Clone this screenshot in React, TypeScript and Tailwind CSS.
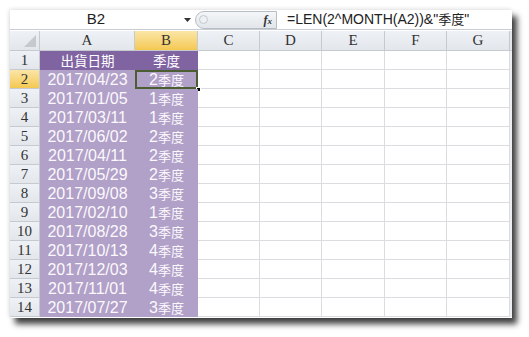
import React from "react";

const rows: [string, string][] = [
  ["2017/04/23", "2"],
  ["2017/01/05", "1"],
  ["2017/03/11", "1"],
  ["2017/06/02", "2"],
  ["2017/04/11", "2"],
  ["2017/05/29", "2"],
  ["2017/09/08", "3"],
  ["2017/02/10", "1"],
  ["2017/08/28", "3"],
  ["2017/10/13", "4"],
  ["2017/12/03", "4"],
  ["2017/11/01", "4"],
  ["2017/07/27", "3"],
];

const cols = [
  { name: "A", w: "w-[95px]" },
  { name: "B", w: "w-[63px]" },
  { name: "C", w: "w-[62px]" },
  { name: "D", w: "w-[62px]" },
  { name: "E", w: "w-[63px]" },
  { name: "F", w: "w-[62px]" },
  { name: "G", w: "w-[63px]" },
];

const sans = "font-['Liberation_Sans','Noto_Sans_CJK_TC',sans-serif]";
const serif = "font-['Liberation_Serif','Noto_Sans_CJK_TC',serif]";
const cjk = "font-['Noto_Sans_CJK_TC',sans-serif]";

const RowHead = ({ n, active }: { n: number; active?: boolean }) => (
  <div
    className={`w-[30px] h-[19px] shrink-0 flex items-center justify-center border-r border-b border-[#c5cad1] text-[15px] leading-none text-[#333] ${serif} ${
      active ? "bg-gradient-to-b from-[#fbe6a6] to-[#f4c84f]" : "bg-gradient-to-b from-[#eef1f5] to-[#e3e7ec]"
    }`}
  >
    {n}
  </div>
);

const App = () => {
  return (
    <div className="w-[529px] h-[337px] bg-white relative overflow-hidden">
      <div className="absolute left-[10px] top-[10px] w-[502px] h-[308px] bg-white shadow-[5px_6px_6px_rgba(0,0,0,0.75),-1px_-1px_4px_rgba(0,0,0,0.12)] flex flex-col">
        {/* formula bar */}
        <div className="h-[20px] flex items-center border-b border-[#c9cdd3]">
          <div className={`w-[172px] h-full flex items-center justify-center text-[15px] text-[#222] ${sans}`}>B2</div>
          <div className="w-[10px] flex items-center justify-center">
            <svg width="7" height="4" viewBox="0 0 7 4">
              <path d="M0 0h7L3.5 4z" fill="#333" />
            </svg>
          </div>
          <div className="w-[82px] h-[18px] ml-[3px] rounded-l-full border border-[#b7bdc5] bg-gradient-to-b from-[#f4f6f8] to-[#e2e6ea] flex items-center pl-[3px]">
            <div className="w-[9px] h-[9px] rounded-full border border-[#c3c8ce] bg-[#eef0f2]" />
            <span className={`ml-auto mr-[4px] text-[12px] italic font-bold text-[#333] ${serif}`}>
              f<span className="text-[9px]">x</span>
            </span>
          </div>
          <div className={`flex-1 pl-[10px] text-[14px] text-[#222] whitespace-nowrap ${sans}`}>
            =LEN(2^MONTH(A2))&amp;"<span className={`text-[13px] ${cjk}`}>季度</span>"
          </div>
        </div>

        {/* column headers */}
        <div className="h-[20px] flex mt-[1px]">
          <div className="w-[30px] shrink-0 border-r border-b border-[#c5cad1] bg-gradient-to-b from-[#eef1f5] to-[#e3e7ec] relative">
            <svg className="absolute right-[3px] bottom-[3px]" width="12" height="12" viewBox="0 0 12 12">
              <path d="M12 0V12H0z" fill="#c6cacf" />
            </svg>
          </div>
          {cols.map((c) => (
            <div
              key={c.name}
              className={`${c.w} shrink-0 flex items-center justify-center border-r border-b border-[#c5cad1] text-[15px] text-[#333] ${serif} ${
                c.name === "B"
                  ? "bg-gradient-to-b from-[#fbe6a6] to-[#f4c84f]"
                  : "bg-gradient-to-b from-[#eef1f5] to-[#e3e7ec]"
              }`}
            >
              {c.name}
            </div>
          ))}
          <div className="flex-1 bg-[#e3e7ec] border-b border-[#c5cad1]" />
        </div>

        {/* row 1 */}
        <div className="flex">
          <RowHead n={1} />
          <div className={`w-[95px] h-[19px] shrink-0 bg-[#8064a2] flex items-center justify-center text-white text-[13.5px] ${cjk}`}>出貨日期</div>
          <div className={`w-[63px] h-[19px] shrink-0 bg-[#8064a2] flex items-center justify-center text-white text-[13.5px] ${cjk}`}>季度</div>
          {cols.slice(2).map((c) => (
            <div key={c.name} className={`${c.w} h-[19px] shrink-0 border-r border-b border-[#dadcdf]`} />
          ))}
          <div className="flex-1 bg-[#eceef1]" />
        </div>

        {rows.map(([d, q], i) => (
          <div key={i} className="flex">
            <RowHead n={i + 2} active={i === 0} />
            <div className={`w-[95px] h-[19px] shrink-0 bg-[#b1a0c7] flex items-center justify-center text-[#fbf9fd] text-[16px] ${sans}`}>{d}</div>
            <div className={`w-[63px] h-[19px] shrink-0 bg-[#b1a0c7] flex items-center justify-center text-[#fbf9fd] text-[16px] relative ${sans}`}>
              {q}
              <span className={`text-[13px] ${cjk}`}>季度</span>
              {i === 0 && (
                <>
                  <div className="absolute inset-0 border-2 border-[#4a5e31]" />
                  <div className="absolute right-[-3px] bottom-[-3px] w-[5px] h-[5px] bg-black border border-white" />
                </>
              )}
            </div>
            {cols.slice(2).map((c) => (
              <div key={c.name} className={`${c.w} h-[19px] shrink-0 border-r border-b border-[#dadcdf]`} />
            ))}
            <div className="flex-1 bg-[#eceef1]" />
          </div>
        ))}
      </div>
    </div>
  );
};

export default App;
